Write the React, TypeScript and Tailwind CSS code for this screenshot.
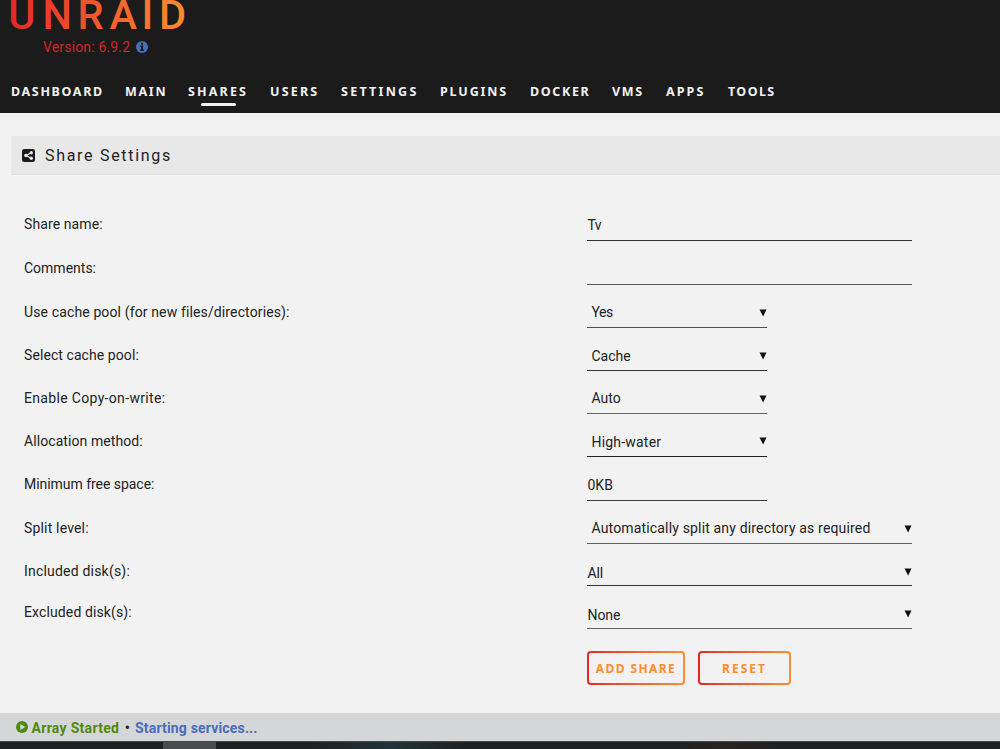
// Share settings page
// - Dark header with logo, version and main navigation
// - Settings form, then the array status bar at the bottom
import React from 'react';

type NavItem = { label: string; width: string; spacing: string; active?: boolean };

const NAV: NavItem[] = [
  { label: 'DASHBOARD', width: 'w-[114px]', spacing: 'tracking-[1.65px]' },
  { label: 'MAIN', width: 'w-[63px]', spacing: 'tracking-[1.7px]' },
  { label: 'SHARES', width: 'w-[82px]', spacing: 'tracking-[2.15px]', active: true },
  { label: 'USERS', width: 'w-[71px]', spacing: 'tracking-[2.2px]' },
  { label: 'SETTINGS', width: 'w-[99px]', spacing: 'tracking-[2.25px]' },
  { label: 'PLUGINS', width: 'w-[90px]', spacing: 'tracking-[1.85px]' },
  { label: 'DOCKER', width: 'w-[82px]', spacing: 'tracking-[1.65px]' },
  { label: 'VMS', width: 'w-[54px]', spacing: 'tracking-[1.7px]' },
  { label: 'APPS', width: 'w-[62px]', spacing: 'tracking-[2.1px]' },
  { label: 'TOOLS', width: 'w-[60px]', spacing: 'tracking-[1.4px]' },
];

type Row = {
  label: string;
  labelSpacing?: string;
  value: string;
  valueSpacing?: string;
  height: string;
  labelPad: string;
  valuePad: string;
  line: string;
  caret?: string;
  wide?: boolean;
  indent?: boolean;
};

const ROWS: Row[] = [
  { label: 'Share name:', labelSpacing: 'tracking-[0.1px]', value: 'Tv', valueSpacing: 'tracking-[-0.7px]', height: 'h-[66px]', labelPad: 'pb-[7px]', valuePad: 'pb-[5px]', line: 'border-[#333]', wide: true },
  { label: 'Comments:', value: '', height: 'h-[44px]', labelPad: 'pb-[7px]', valuePad: 'pb-[5px]', line: 'border-[#5a5a5a]', wide: true },
  { label: 'Use cache pool (for new files/directories):', labelSpacing: 'tracking-[0.13px]', value: 'Yes', valueSpacing: 'tracking-[-0.5px]', height: 'h-[43px]', labelPad: 'pb-[6px]', valuePad: 'pb-[5px]', line: 'border-[#505050]', caret: 'mb-[10px]', indent: true },
  { label: 'Select cache pool:', labelSpacing: 'tracking-[0.08px]', value: 'Cache', height: 'h-[43px]', labelPad: 'pb-[6px]', valuePad: 'pb-[4px]', line: 'border-[#333]', caret: 'mb-[10px]', indent: true },
  { label: 'Enable Copy-on-write:', labelSpacing: 'tracking-[0.33px]', value: 'Auto', height: 'h-[43px]', labelPad: 'pb-[6px]', valuePad: 'pb-[5px]', line: 'border-[#666]', caret: 'mb-[10px]', indent: true },
  { label: 'Allocation method:', labelSpacing: 'tracking-[0.08px]', value: 'High-water', valueSpacing: 'tracking-[0.2px]', height: 'h-[43px]', labelPad: 'pb-[6px]', valuePad: 'pb-[4px]', line: 'border-[#222]', caret: 'mb-[11px]', indent: true },
  { label: 'Minimum free space:', labelSpacing: 'tracking-[-0.04px]', value: '0KB', height: 'h-[44px]', labelPad: 'pb-[7px]', valuePad: 'pb-[5px]', line: 'border-[#3c3c3c]' },
  { label: 'Split level:', labelSpacing: 'tracking-[0.17px]', value: 'Automatically split any directory as required', valueSpacing: 'tracking-[0.16px]', height: 'h-[43px]', labelPad: 'pb-[6px]', valuePad: 'pb-[5px]', line: 'border-[#606060]', caret: 'mb-[10px]', wide: true, indent: true },
  { label: 'Included disk(s):', labelSpacing: 'tracking-[0.2px]', value: 'All', valueSpacing: 'tracking-[-0.2px]', height: 'h-[42px]', labelPad: 'pb-[5px]', valuePad: 'pb-[2px]', line: 'border-[#333]', caret: 'mb-[9px]', wide: true },
  { label: 'Excluded disk(s):', labelSpacing: 'tracking-[0.12px]', value: 'None', valueSpacing: 'tracking-[-0.1px]', height: 'h-[43px]', labelPad: 'pb-[7px]', valuePad: 'pb-[3px]', line: 'border-[#606060]', caret: 'mb-[10px]', wide: true },
];

const Logo: React.FC = () => (
  <svg width="200" height="32" viewBox="0 0 200 32" className="block" aria-label="Unraid">
    <defs>
      <linearGradient id="logo" gradientUnits="userSpaceOnUse" x1="10" y1="0" x2="186" y2="0">
        <stop offset="0" stopColor="#e22828" />
        <stop offset="1" stopColor="#ff8c2f" />
      </linearGradient>
    </defs>
    <text x="8.3 42.5 77.5 109.5 141.5 159" y="29" fill="url(#logo)" fontSize="41.5" fontWeight="500" fontFamily="Roboto, sans-serif">
      UNRAID
    </text>
  </svg>
);

const Caret: React.FC<{ className: string }> = ({ className }) => (
  <svg width="8" height="8" viewBox="0 0 8 8" className={`${className} shrink-0`} fill="#111">
    <path d="M0.5 0.5h7L4.1 7.4z" />
  </svg>
);

const GradientButton: React.FC<{ label: string; width: string; spacing: string }> = ({ label, width, spacing }) => (
  <button type="button" className={`${width} h-[34px] rounded-[4px] bg-linear-to-r from-[#e22828] to-[#ff8c2f] p-[2px]`}>
    <span className={`${spacing} flex h-full items-center justify-center rounded-[2px] bg-[#f2f2f2] pt-[2px] font-['Noto_Sans',sans-serif] text-[12px] font-bold text-[#ff8c2f]`}>
      {label}
    </span>
  </button>
);

const App: React.FC = () => (
  <div className="flex h-[749px] w-[1000px] flex-col overflow-hidden bg-[#f2f2f2] font-[Roboto,sans-serif] text-[14px] text-[#222]">
    <header className="h-[113px] shrink-0 bg-[#1c1b1b]">
      <Logo />
      <div className="flex h-[30px] items-center gap-[6px] pl-[43px] text-[#d42626]">
        <span className="tracking-[0.16px]">Version: 6.9.2</span>
        <svg width="12" height="12" viewBox="0 0 12 12">
          <circle cx="6" cy="6" r="6" fill="#486dba" />
          <path d="M5 1.7h2.1v1.8H5zM4.2 4.6h2.9v4h.8V10H4.2V8.600h.8V6h-.8z" fill="#1c1b1b" />
        </svg>
      </div>
      <nav className="flex pt-[20px] pl-[11px] font-['Noto_Sans',sans-serif] text-[12.5px] leading-[20px] font-bold text-[#f2f2f2]">
        {NAV.map((item) => (
          <a key={item.label} className={`${item.width} ${item.spacing} flex flex-col whitespace-nowrap`}>
            {item.label}
            {item.active && <span className="mt-px ml-[13px] h-[3px] w-[35px] rounded-full bg-[#f2f2f2]" />}
          </a>
        ))}
      </nav>
    </header>

    <main className="flex-1">
      <div className="mt-[23px] ml-[11px] flex h-[39px] items-center border-b border-[#e0e0e0] bg-[#e8e8e8] pl-[11px]">
        <svg width="13" height="13" viewBox="0 0 13 13">
          <rect width="13" height="13" rx="2.3" fill="#1c1b1b" />
          <path d="M9.300 3.700L4 6.500l5.300 2.800" fill="none" stroke="#e8e8e8" strokeWidth="1.200" />
          <circle cx="9.300" cy="3.700" r="1.700" fill="#e8e8e8" />
          <circle cx="3.900" cy="6.500" r="1.700" fill="#e8e8e8" />
          <circle cx="9.300" cy="9.300" r="1.700" fill="#e8e8e8" />
        </svg>
        <h1 className="ml-[10px] pt-px text-[16px] tracking-[1.7px]">Share Settings</h1>
      </div>

      <form className="pl-[24px]">
        {ROWS.map((row) => (
          <div key={row.label} className={`${row.height} flex items-end`}>
            <label className={`${row.labelPad} ${row.labelSpacing ?? ''} w-[563px] leading-[20px]`}>{row.label}</label>
            <div className={`${row.wide ? 'w-[325px]' : 'w-[180px]'} ${row.line} flex items-end justify-between border-b`}>
              <span className={`${row.valuePad} ${row.valueSpacing ?? ''} ${row.indent ? 'pl-[4.5px]' : 'pl-[0.5px]'} min-h-[20px] leading-[20px]`}>
                {row.value}
              </span>
              {row.caret && <Caret className={row.caret} />}
            </div>
          </div>
        ))}
        <div className="mt-[22px] ml-[563px] flex gap-[13px]">
          <GradientButton label="ADD SHARE" width="w-[98px]" spacing="tracking-[1.4px]" />
          <GradientButton label="RESET" width="w-[93px]" spacing="tracking-[2px]" />
        </div>
      </form>
    </main>

    <footer className="shrink-0">
      <div className="flex h-[28px] items-center bg-[#d5d6d7] pl-[16px] font-bold">
        <svg width="12" height="12" viewBox="0 0 12 12">
          <circle cx="6" cy="6" r="6" fill="#4f8a10" />
          <path d="M4.300 3l5 3-5 3z" fill="#d5d6d7" />
        </svg>
        <span className="ml-[3.5px] pt-[2px] tracking-[0.3px] text-[#4f8a10]">Array Started</span>
        <span className="mx-[5.4px] pt-[2px]">•</span>
        <span className="pt-[2px] tracking-[0.17px] text-[#486dba]">Starting services...</span>
      </div>
      {/* strip of the desktop panel below the page */}
      <div className="flex h-[8px] border-t border-[#45474b] bg-[#1e2023]">
        <div className="ml-[163px] w-[53px] bg-[#4b4c50]" />
        <div className="ml-[94px] w-[160px] bg-linear-to-r from-[#1e2023] via-[#20343a] to-[#1e2023]" />
        <div className="ml-[200px] w-[110px] bg-linear-to-r from-[#1e2023] via-[#29221e] to-[#1e2023]" />
      </div>
    </footer>
  </div>
);

export default App;
